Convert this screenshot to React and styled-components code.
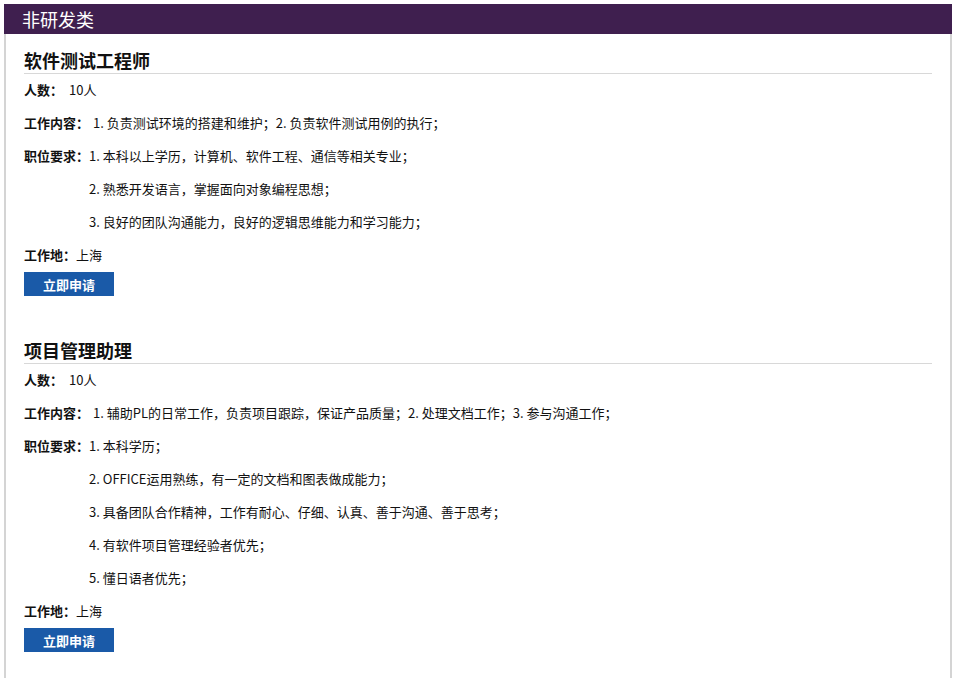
import React from "react";
import styled, { createGlobalStyle } from "styled-components";

const Global = createGlobalStyle`
  body { margin: 0; background: #fff; font-family: "Noto Sans CJK SC", "Liberation Sans", sans-serif; color: #111; }
`;

const Page = styled.div`
  padding: 4px 4px 0 4px;
`;

const Header = styled.div`
  height: 30px;
  background: #3f1f4f;
  color: #fff;
  font-size: 18px;
  line-height: 30px;
  padding-left: 18px;
`;

const Panel = styled.div`
  border-left: 2px solid #d4d4d4;
  border-right: 2px solid #d4d4d4;
  padding: 13px 18px 30px 18px;
`;

const Job = styled.div`
  margin-bottom: 41px;
`;

const Title = styled.h2`
  margin: 0;
  font-size: 18px;
  font-weight: bold;
  line-height: 26px;
  border-bottom: 1px solid #d8d8d8;
`;

const Row = styled.div`
  display: flex;
  font-size: 13px;
  line-height: 20px;
  margin-top: ${p => p.$first ? "6px" : "13px"};
`;

const Label = styled.b`
  white-space: nowrap;
  margin-right: ${p => p.$gap || "0"};
`;

const Items = styled.div`
  display: flex;
  flex-direction: column;
  gap: 13px;
`;

const Button = styled.button`
  margin-top: 7px;
  width: 90px;
  height: 24px;
  border: none;
  background: #1a5aa8;
  color: #fff;
  font-family: inherit;
  font-size: 13px;
  font-weight: bold;
  padding: 0;
  display: block;
`;

const jobs = [
  {
    title: "软件测试工程师",
    content: "1. 负责测试环境的搭建和维护；2. 负责软件测试用例的执行；",
    reqs: ["1. 本科以上学历，计算机、软件工程、通信等相关专业；", "2. 熟悉开发语言，掌握面向对象编程思想；", "3. 良好的团队沟通能力，良好的逻辑思维能力和学习能力；"],
  },
  {
    title: "项目管理助理",
    content: "1. 辅助PL的日常工作，负责项目跟踪，保证产品质量；2. 处理文档工作；3. 参与沟通工作；",
    reqs: ["1. 本科学历；", "2. OFFICE运用熟练，有一定的文档和图表做成能力；", "3. 具备团队合作精神，工作有耐心、仔细、认真、善于沟通、善于思考；", "4. 有软件项目管理经验者优先；", "5. 懂日语者优先；"],
  },
];

export default function App() {
  return (
    <Page>
      <Global />
      <Header>非研发类</Header>
      <Panel>
        {jobs.map(j => (
          <Job key={j.title}>
            <Title>{j.title}</Title>
            <Row $first><Label $gap="6px">人数：</Label>10人</Row>
            <Row><Label $gap="4px">工作内容：</Label>{j.content}</Row>
            <Row>
              <Label>职位要求：</Label>
              <Items>{j.reqs.map(r => <span key={r}>{r}</span>)}</Items>
            </Row>
            <Row><Label>工作地：</Label>上海</Row>
            <Button>立即申请</Button>
          </Job>
        ))}
      </Panel>
    </Page>
  );
}
